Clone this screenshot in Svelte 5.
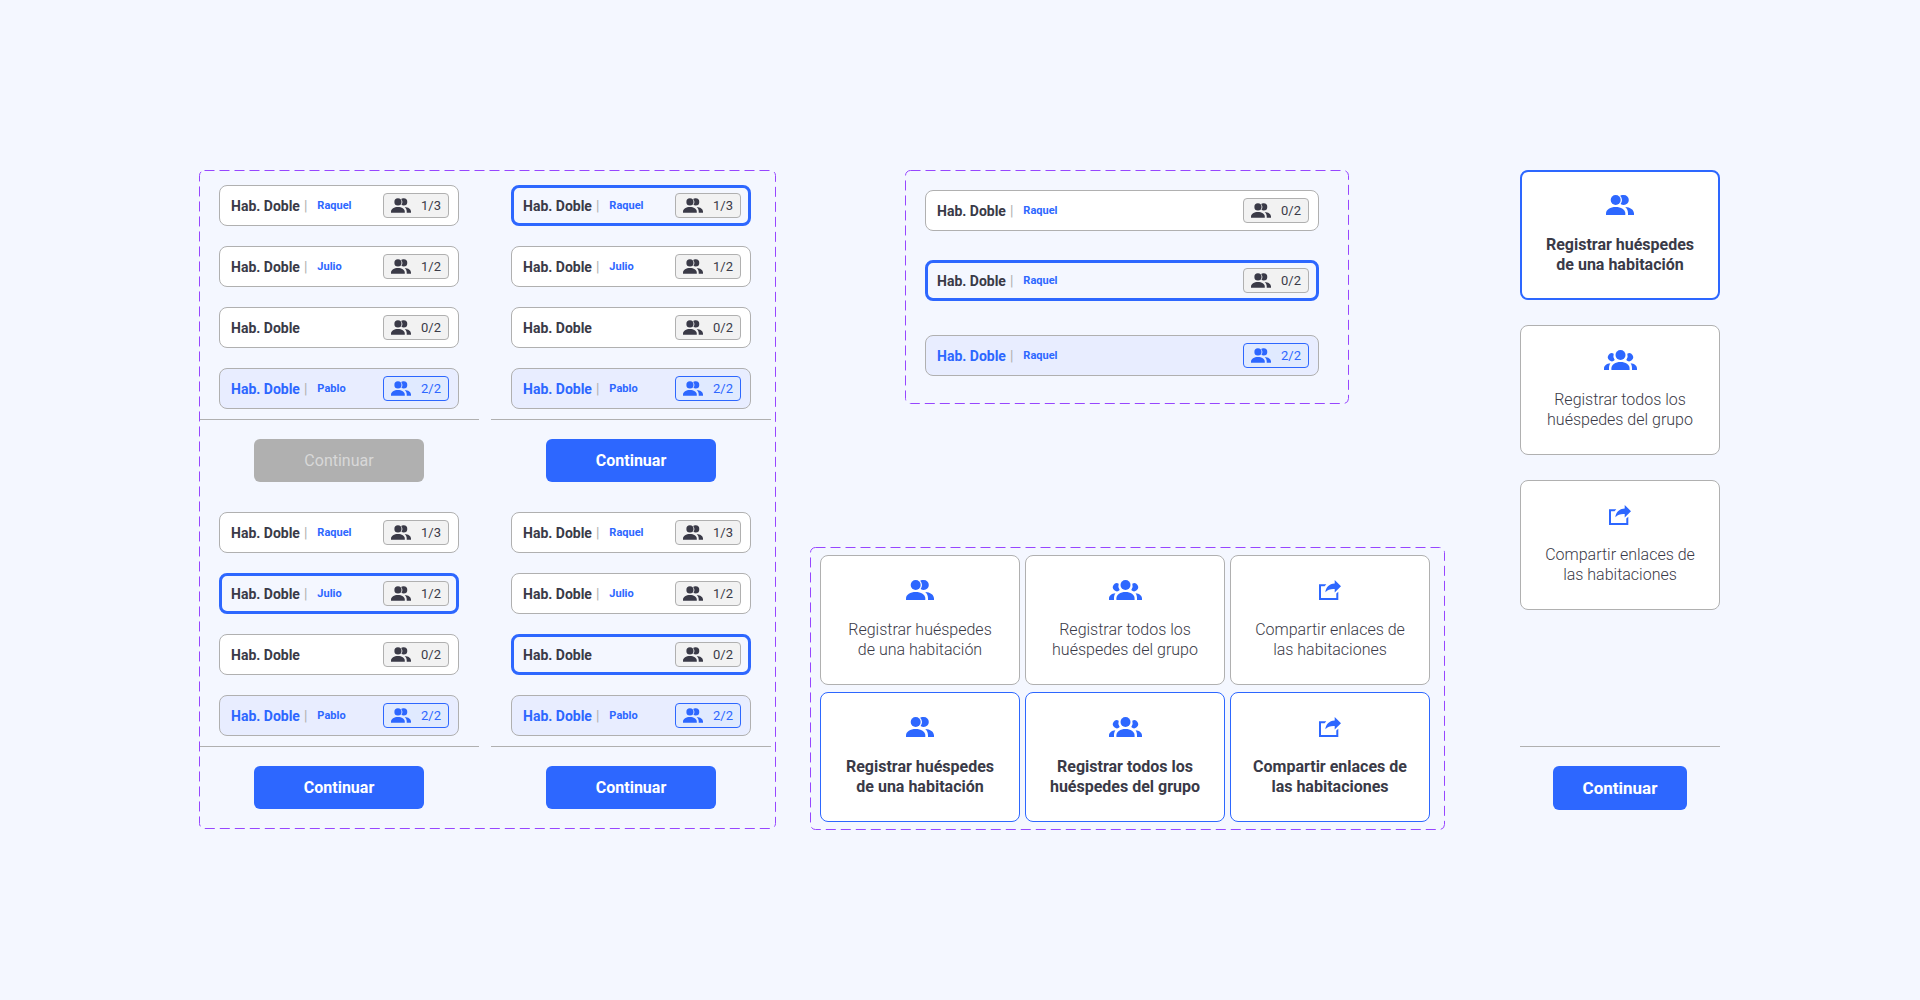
<script lang="ts">
	type Room = { name: string; guest?: string; count: string; full?: boolean };

	const rooms: Room[] = [
		{ name: 'Hab. Doble', guest: 'Raquel', count: '1/3' },
		{ name: 'Hab. Doble', guest: 'Julio', count: '1/2' },
		{ name: 'Hab. Doble', count: '0/2' },
		{ name: 'Hab. Doble', guest: 'Pablo', count: '2/2', full: true }
	];

	const options = [
		{ icon: 'pair', lines: ['Registrar huéspedes', 'de una habitación'] },
		{ icon: 'group', lines: ['Registrar todos los', 'huéspedes del grupo'] },
		{ icon: 'share', lines: ['Compartir enlaces de', 'las habitaciones'] }
	];

	// Selected room index for each list, -1 when nothing is picked yet
	let picks = $state([-1, 0, 1, 2]);
	let option = $state(0);
</script>

{#snippet icon(kind: string)}
	{#if kind === 'pair'}
		<svg class="icon" viewBox="0 0 28 20" aria-hidden="true">
			<circle cx="9.7" cy="5" r="5" />
			<path d="M14.2 .8A5 5 0 0 1 17.8 0a5 5 0 0 1 0 10 5 5 0 0 1-3.2-1.1A6.6 6.6 0 0 0 16 5 6.6 6.6 0 0 0 14.2 .8Z" />
			<path d="M0 20v-1.5C0 14.5 4.4 12 9.7 12s9.6 2.5 9.6 6.5V20Z" />
			<path d="M19.2 12C24.2 12.3 28 14.7 28 18.5V20h-6v-1.5c0-2.7-1-4.9-2.8-6.5Z" />
		</svg>
	{:else if kind === 'group'}
		<svg class="icon" viewBox="0 0 33 20" aria-hidden="true">
			<circle cx="16.5" cy="5" r="5" />
			<path d="M9.7 3.7A4 4 0 1 0 10.7 10.1 7 7 0 0 1 9.7 3.7Z" />
			<path d="M23.3 3.7A4 4 0 1 1 22.3 10.1 7 7 0 0 0 23.3 3.7Z" />
			<path d="M7.4 20v-1.5c0-4 4-6.5 9.1-6.5s9.1 2.5 9.1 6.5V20Z" />
			<path d="M0 20v-1.5c0-2.8 2.6-4.8 6.4-5.2C5.3 14.8 5 16.5 5 18.3V20Z" />
			<path d="M33 20v-1.5c0-2.8-2.6-4.8-6.4-5.2 1.1 1.5 1.4 3.2 1.4 5V20Z" />
		</svg>
	{:else}
		<svg class="icon" viewBox="0 0 22 20" aria-hidden="true">
			<path d="M0 4.3h7.3L5.6 6.3H2V18h15.3v-4.6l2-1.6V20H0Z" />
			<path d="M15.7 0 22 6.2l-6.3 6.2V9c-4-.2-7 .5-9.3 3.2C6.7 7.4 10 3.7 15.7 3.4Z" />
		</svg>
	{/if}
{/snippet}

{#snippet outline()}
	<svg class="outline" aria-hidden="true"><rect x="0.5" y="0.5" rx="5" /></svg>
{/snippet}

{#snippet roomRow(room: Room, selected: boolean, onpick?: () => void)}
	<button type="button" class="room" class:selected class:full={room.full} aria-pressed={selected} onclick={onpick}>
		<span class="name">{room.name}</span>
		{#if room.guest}
			<span class="bar">|</span>
			<span class="guest">{room.guest}</span>
		{/if}
		<span class="badge">
			{@render icon('pair')}
			<span class="count">{room.count}</span>
		</span>
	</button>
{/snippet}

{#snippet card(item: (typeof options)[number], selected: boolean, onpick?: () => void)}
	<button type="button" class="card" class:selected aria-pressed={selected} onclick={onpick}>
		{@render icon(item.icon)}
		<span class="label">
			{#each item.lines as line}
				<span>{line}</span>
			{/each}
		</span>
	</button>
{/snippet}

<main>
	<section class="frame lists">
		{@render outline()}
		{#each picks as pick, i}
			<div class="list">
				<div class="rooms">
					{#each rooms as room, j}
						{@render roomRow(room, pick === j, () => {
							if (!room.full) picks[i] = j;
						})}
					{/each}
				</div>
				<hr />
				<button type="button" class="continue" disabled={pick < 0}>Continuar</button>
			</div>
		{/each}
	</section>

	<div class="middle">
		<section class="frame states">
			{@render outline()}
			{@render roomRow({ name: 'Hab. Doble', guest: 'Raquel', count: '0/2' }, false)}
			{@render roomRow({ name: 'Hab. Doble', guest: 'Raquel', count: '0/2' }, true)}
			{@render roomRow({ name: 'Hab. Doble', guest: 'Raquel', count: '2/2', full: true }, false)}
		</section>

		<section class="frame cards">
			{@render outline()}
			{#each [false, true] as selected}
				{#each options as item}
					{@render card(item, selected)}
				{/each}
			{/each}
		</section>
	</div>

	<section class="chooser">
		{#each options as item, i}
			{@render card(item, option === i, () => (option = i))}
		{/each}
		<footer>
			<hr />
			<button type="button" class="continue compact">Continuar</button>
		</footer>
	</section>
</main>

<style>
	:global(body) {
		margin: 0;
		background: #f4f7ff;
	}

	main {
		--blue: #2d67ff;
		--gray: #b0b0b0;
		--ink: #3a3a47;
		display: grid;
		/* the middle track includes its own side margins */
		grid-template-columns: 577fr 744fr 200fr;
		padding: 170px 200px 170px 199px;
		font-family: Roboto, sans-serif;
		color: var(--ink);
	}

	button {
		box-sizing: border-box;
		margin: 0;
		font-family: inherit;
		color: inherit;
		cursor: pointer;
	}

	hr {
		width: 100%;
		height: 1px;
		margin: 0;
		border: 0;
		background: var(--gray);
	}

	.icon {
		display: block;
		height: 20px;
		fill: currentColor;
	}

	/* Dashed frame around each set of variants */
	.frame {
		position: relative;
		box-sizing: border-box;
	}

	.outline {
		position: absolute;
		inset: 0;
		width: 100%;
		height: 100%;
		pointer-events: none;
	}

	.outline rect {
		width: calc(100% - 1px);
		height: calc(100% - 1px);
		fill: none;
		stroke: #9747ff;
		stroke-dasharray: 10 5;
	}

	.lists {
		display: grid;
		grid-template-columns: 1fr 1fr;
		align-self: start;
		gap: 30px 12px;
		padding: 15px 5px 20px 0;
	}

	.list {
		display: flex;
		flex-direction: column;
		align-items: center;
	}

	.rooms {
		display: flex;
		flex-direction: column;
		align-self: stretch;
		gap: 20px;
		padding: 0 20px 10px;
	}

	.list .continue {
		margin-top: 19px;
	}

	.room {
		display: flex;
		align-items: center;
		height: 41px;
		padding: 0 9px 0 11px;
		border: 1px solid var(--gray);
		border-radius: 8px;
		background: #fff;
		font-size: 14px;
		line-height: 16px;
	}

	.room.selected {
		padding: 0 7px 0 9px;
		border: 3px solid var(--blue);
		background: transparent;
	}

	.room.full {
		background: #e8edff;
	}

	.name {
		font-weight: 700;
	}

	.full .name,
	.guest {
		color: var(--blue);
	}

	.bar {
		margin-left: 4px;
		color: var(--gray);
	}

	.guest {
		margin-left: 10px;
		font-size: 11px;
		font-weight: 700;
	}

	.badge {
		display: flex;
		align-items: center;
		justify-content: space-between;
		box-sizing: border-box;
		width: 66px;
		height: 25px;
		margin-left: auto;
		padding: 0 7px;
		border: 1px solid var(--gray);
		border-radius: 4px;
		background: #f2f2f2;
		font-size: 13px;
	}

	.badge .icon {
		width: 20px;
		height: 15px;
	}

	.full .badge {
		border-color: var(--blue);
		background: #e0eaff;
		color: var(--blue);
	}

	.continue {
		height: 43px;
		padding: 0 50px;
		border: 0;
		border-radius: 6px;
		background: var(--blue);
		color: #fff;
		font-size: 16px;
		font-weight: 700;
	}

	.continue:disabled {
		background: var(--gray);
		color: #d8d8d8;
		font-weight: 400;
		cursor: default;
	}

	.continue.compact {
		height: 44px;
		padding: 0 30px;
		font-size: 17px;
	}

	.middle {
		display: flex;
		flex-direction: column;
		gap: 143px;
		margin: 0 75px 0 34px;
	}

	.states {
		display: flex;
		flex-direction: column;
		margin: 0 96px 0 95px;
		padding: 20px 30px 28px 20px;
	}

	.states .room + .room {
		margin-top: 29px;
	}

	.states .room.full {
		margin-top: 34px;
	}

	.cards {
		display: grid;
		grid-template-columns: repeat(3, 1fr);
		gap: 7px 5px;
		padding: 8px 15px 8px 10px;
	}

	.card {
		display: flex;
		flex-direction: column;
		align-items: center;
		justify-content: center;
		gap: 20px;
		height: 130px;
		padding: 0;
		border: 1px solid var(--gray);
		border-radius: 8px;
		background: #fff;
		font-size: 16px;
		font-weight: 300;
		line-height: 20px;
	}

	.card .icon {
		color: var(--blue);
	}

	.card.selected {
		border-color: var(--blue);
		font-weight: 700;
	}

	.label {
		display: flex;
		flex-direction: column;
	}

	.chooser {
		display: flex;
		flex-direction: column;
		gap: 25px;
		padding-bottom: 20px;
	}

	.chooser .card.selected {
		border-width: 2px;
	}

	footer {
		display: flex;
		flex-direction: column;
		align-items: center;
		gap: 19px;
		margin-top: auto;
	}
</style>
